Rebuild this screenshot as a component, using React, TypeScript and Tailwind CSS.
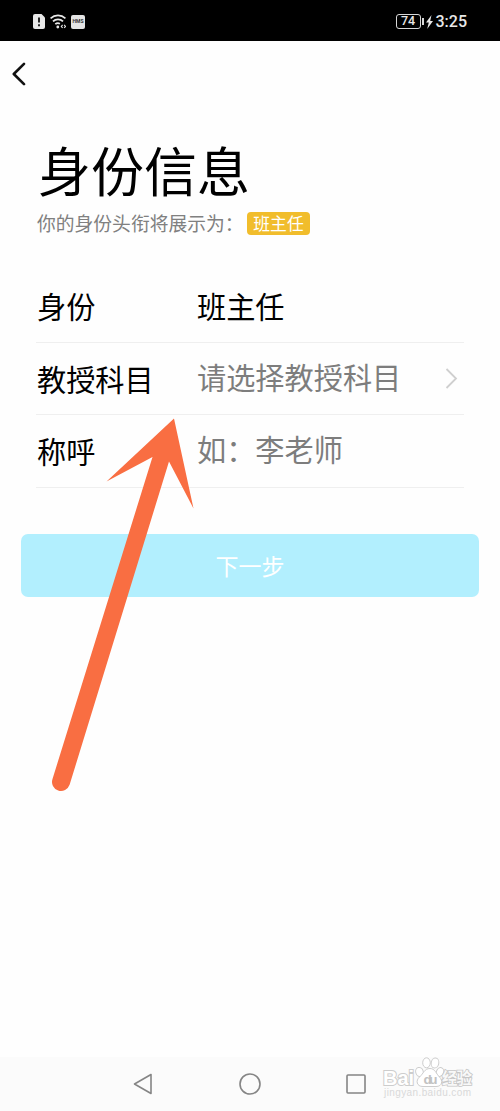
import type { ReactNode } from "react";

const StatusBar = () => (
  <div className="flex h-[41px] shrink-0 items-center justify-between bg-black pl-[33px] pr-[33px] pt-[2px] text-[#e8e8e8]">
    <div className="flex items-center gap-[5px]">
      <svg width="12" height="15" viewBox="0 0 12 15">
        <path d="M2 0h6.5L12 3.5V13a2 2 0 0 1-2 2H2a2 2 0 0 1-2-2V2a2 2 0 0 1 2-2Z" fill="#e8e8e8" />
        <path d="M6 3.5v5M6 10.3v2" stroke="#111" strokeWidth="1.8" />
      </svg>
      <svg width="16" height="15" viewBox="0 0 16 15" fill="none" stroke="#e8e8e8" strokeWidth="1.8">
        <path d="M0.5 4.4a11 11 0 0 1 15 0M3 7.4a7.2 7.2 0 0 1 10 0M5.3 10.2a4 4 0 0 1 4.6-.5" />
        <circle cx="7.8" cy="13" r="1.4" fill="#e8e8e8" stroke="none" />
        <path d="m12.6 10.8-1.3 1.6 1.3 1.6M14.2 10.8l1.3 1.6-1.3 1.6" strokeWidth="1.1" />
      </svg>
      <span className="flex h-[14px] w-[14px] items-center justify-center rounded-[2px] bg-[#e4e4e4] text-[5px] font-bold leading-none text-[#333]">
        HMS
      </span>
    </div>
    <div className="flex items-center">
      <span className="flex h-[15px] w-[25px] items-center justify-center rounded-[3px] border border-[#d8d8d8] text-[12.5px] font-medium leading-none">
        74
      </span>
      <span className="ml-[1.5px] h-[7px] w-[1.5px] bg-[#d8d8d8]" />
      <svg className="ml-[2px]" width="7" height="14" viewBox="0 0 7 14" fill="#e8e8e8">
        <path d="M5.5 0 0 7.5h2.8L1.2 14 7 6H4.2Z" />
      </svg>
      <span className="ml-[3px] text-[16px] font-medium leading-none">3:25</span>
    </div>
  </div>
);

const Row = ({ label, children }: { label: string; children: ReactNode }) => (
  <div className="flex h-[72.6px] items-center border-b border-[#efefef] pl-[1px] text-[29.2px] leading-none">
    <div className="w-[160px] text-black">{label}</div>
    {children}
  </div>
);

const PointerArrow = () => (
  <svg className="pointer-events-none absolute left-0 top-0" width="250" height="800" viewBox="0 0 250 800">
    <path
      d="M174 418.5 106.5 481.5 152.5 457 52.5 779A9 9 0 0 0 69.6 784.8L169 461.5 193.5 508.5Z"
      fill="#f96e42"
    />
  </svg>
);

const Watermark = () => (
  <svg
    className="absolute right-[26px] top-[-2px]"
    width="94"
    height="48"
    viewBox="0 0 94 48"
    fill="#fff"
    stroke="#cdcdcd"
    strokeWidth="1"
    fontFamily="'Liberation Sans', 'Noto Sans CJK SC', sans-serif"
    fontWeight="700"
  >
    <text x="3" y="29.5" fontSize="20" textLength="31" paintOrder="stroke" strokeWidth="2">Bai</text>
    <ellipse cx="39.5" cy="17" rx="3.8" ry="4.6" transform="rotate(-15 39.5 17)" />
    <ellipse cx="46.5" cy="7.8" rx="3.8" ry="5" />
    <ellipse cx="55" cy="8" rx="3.8" ry="5" transform="rotate(10 55 8)" />
    <ellipse cx="60" cy="17" rx="3.6" ry="4.6" transform="rotate(20 60 17)" />
    <path d="M50 13.5c5 0 6 5 9.500 8.500 3.500 3.500 3 9.500-3.500 9.500H43c-6.500 0-7.500-6-3.500-9.500 4-3.500 5-8.500 10.500-8.500Z" />
    <text x="43.500" y="28.500" fontSize="13.500" textLength="14" fill="#c2c2c2" stroke="none">du</text>
    <text x="62" y="29" fontSize="15.500" textLength="30" fill="#f8f8f8" paintOrder="stroke" stroke="#c6c6c6" strokeWidth="1.600">经验</text>
    <text x="4" y="41" fontSize="10" fontWeight="400" textLength="87" fill="#d9d9d9" stroke="none">jingyan.baidu.com</text>
  </svg>
);

export default function App() {
  return (
    <div className="relative flex h-[1111px] w-[500px] flex-col overflow-hidden bg-[#fefefe] font-['Roboto','Noto_Sans_CJK_SC',sans-serif]">
      <StatusBar />

      <header className="flex h-[66px] shrink-0 items-center pl-[12px]">
        <svg width="14" height="24" viewBox="0 0 14 24" fill="none" stroke="#111" strokeWidth="2.6" strokeLinecap="round" strokeLinejoin="round">
          <path d="M12 1.800 1.800 12 12 22.200" />
        </svg>
      </header>

      <main className="px-[36px] pt-[35px] font-['Noto_Sans_CJK_SC',sans-serif]">
        <h1 className="pl-[2px] text-[53px] leading-[54px] text-black">身份信息</h1>
        <div className="mt-[15px] flex h-[24px] items-center pl-[1px] text-[18.8px] leading-none text-[#808080]">
          <span className="w-[210px] whitespace-nowrap">你的身份头衔将展示为：</span>
          <span className="flex h-[23px] w-[63px] items-center justify-center rounded-[4px] bg-[#f1bd2c] text-[16.800px] text-white">
            班主任
          </span>
        </div>

        <div className="mt-[35px]">
          <Row label="身份">
            <span className="text-black">班主任</span>
          </Row>
          <Row label="教授科目">
            <span className="flex-1 pb-[4px] text-[#7d7d7d]">请选择教授科目</span>
            <svg className="mr-[6px]" width="13" height="21" viewBox="0 0 13 21" fill="none" stroke="#cfcfcf" strokeWidth="1.800">
              <path d="m1.500 1 9.500 9.500L1.500 20" />
            </svg>
          </Row>
          <Row label="称呼">
            <span className="pb-[4px] text-[#7d7d7d]">如：李老师</span>
          </Row>
        </div>
      </main>

      <button className="mx-[21px] mt-[46px] h-[63px] shrink-0 rounded-[7px] bg-[#b2effe] font-['Noto_Sans_CJK_SC',sans-serif] text-[23px] leading-none text-white">
        下一步
      </button>

      <nav className="relative mt-auto flex h-[54px] shrink-0 items-center justify-between bg-[#fbfbfb] pl-[133px] pr-[133px]">
        <svg width="20" height="22" viewBox="0 0 20 22" fill="none" stroke="#858585" strokeWidth="1.600" strokeLinejoin="round">
          <path d="M18 1.500v19L1.500 11Z" />
        </svg>
        <svg className="ml-[2px]" width="22" height="22" viewBox="0 0 22 22" fill="none" stroke="#858585" strokeWidth="1.600">
          <circle cx="11" cy="11" r="10" />
        </svg>
        <svg width="22" height="22" viewBox="0 0 22 22" fill="none" stroke="#858585" strokeWidth="1.600">
          <rect x="2" y="2" width="18" height="18" rx="1" />
        </svg>
        <Watermark />
      </nav>

      <PointerArrow />
    </div>
  );
}
